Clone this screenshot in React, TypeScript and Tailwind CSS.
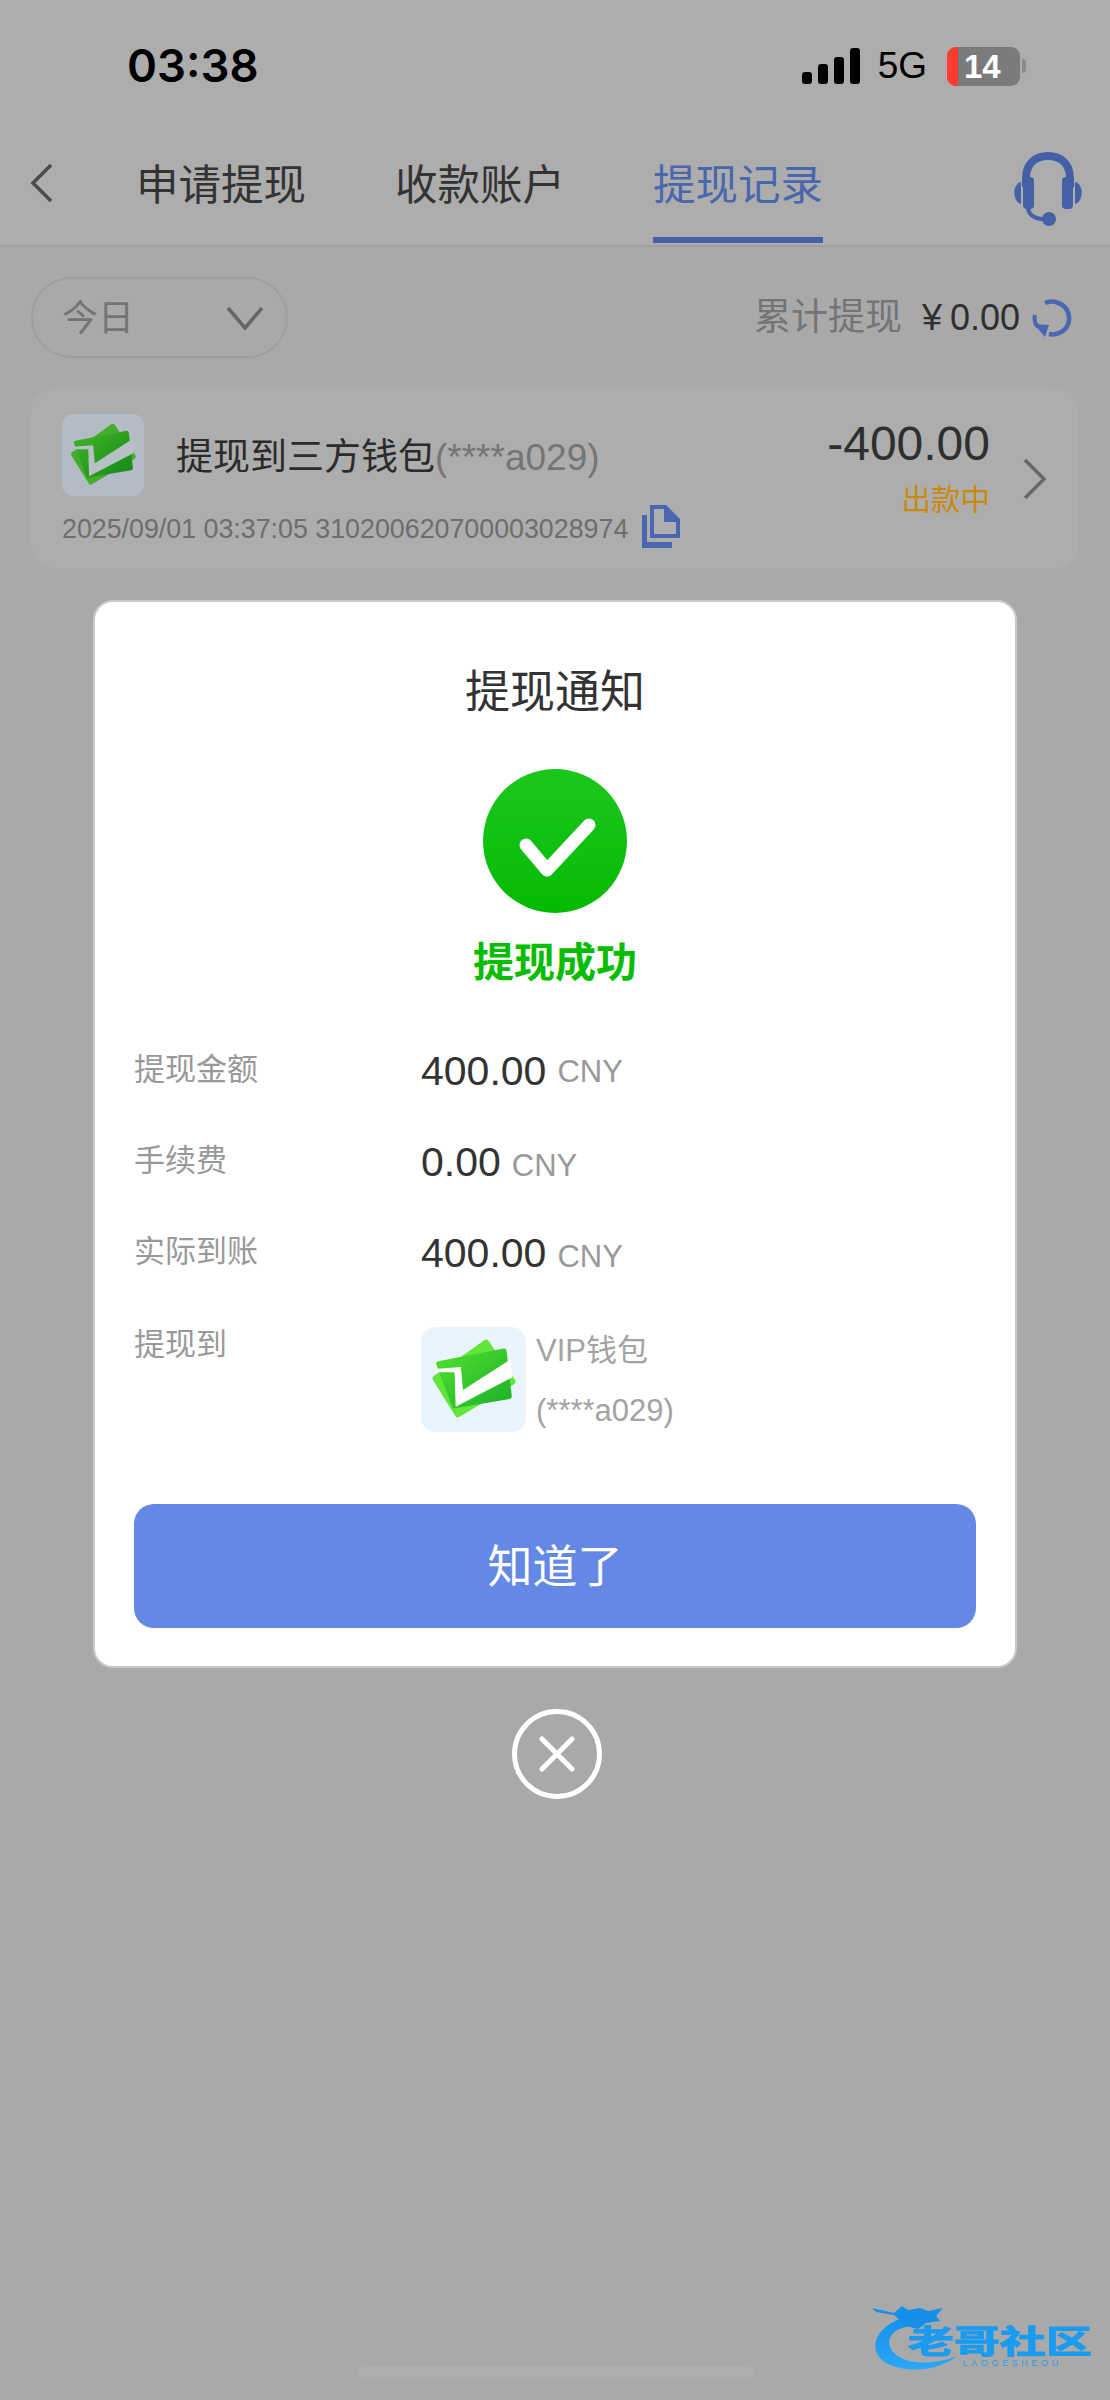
import React from "react";

const SANS = "font-['Liberation_Sans','Noto_Sans_CJK_SC',sans-serif]";

function WalletLogo({ id, dim, className }: { id: string; dim?: boolean; className: string }) {
  const bg = dim ? "#b3bcc5" : "#e9f4fd";
  const back = dim ? "#45ad2c" : "#62e53a";
  const from = dim ? "#41b32a" : "#4fe02e";
  const to = dim ? "#158a17" : "#1fb02a";
  const slash = dim ? "#b7c0c4" : "#ffffff";
  return (
    <svg viewBox="0 0 100 100" className={className}>
      <defs>
        <linearGradient id={id} x1="0" y1="0" x2="1" y2="1">
          <stop offset="0" stopColor={from} />
          <stop offset="1" stopColor={to} />
        </linearGradient>
      </defs>
      <rect width="100" height="100" rx="14" fill={bg} />
      <path d="M14 49 L62 15 L87 52 L35 83 Z" fill={back} stroke={back} strokeWidth="6" strokeLinejoin="round" />
      <path d="M17 35 L79 23 L84 66 L32 75 Z" fill={`url(#${id})`} stroke={`url(#${id})`} strokeWidth="5" strokeLinejoin="round" />
      <path d="M13 40 L38 38 L40 60 L85 31 L87 48 L33 76 L32 43 L14 43 Z" fill={slash} />
    </svg>
  );
}

function Headset() {
  return (
    <svg viewBox="0 0 72 76" className="h-[76px] w-[72px]" fill="none">
      <path d="M14 36 V27 C14 13 23 5 36 5 C49 5 58 13 58 27 V36" stroke="#4560a6" strokeWidth="8" />
      <rect x="11" y="26" width="11" height="32" rx="4" fill="#4560a6" />
      <rect x="50" y="26" width="11" height="32" rx="4" fill="#4560a6" />
      <path d="M9 31 C0 33 0 50 9 53 Z M63 31 C72 33 72 50 63 53 Z" fill="#4560a6" />
      <path d="M16 56 C16 64 23 68 32 68" stroke="#4560a6" strokeWidth="4" />
      <circle cx="37" cy="68" r="7" fill="#4560a6" />
    </svg>
  );
}

function RefreshMark() {
  return (
    <svg viewBox="0 0 40 40" className="h-[40px] w-[40px]" fill="none">
      <path d="M13 5 C22 1 36 6 37 19 C38 31 27 38 17 36" stroke="#4a67b4" strokeWidth="4.5" />
      <path d="M3 17 C2 21 3 26 6 29" stroke="#4a67b4" strokeWidth="4" />
      <path d="M2 26 L17 27 L13 39 Z" fill="#4a67b4" />
    </svg>
  );
}

function CopyMark() {
  return (
    <svg viewBox="0 0 40 46" className="h-[46px] w-[40px]">
      <path d="M8 2 H24 L38 16 V35 H8 Z" fill="#4a66b0" />
      <path d="M0 12 H5 V39 H30 V45 H0 Z" fill="#4a66b0" />
      <path d="M12 6 H22 V19 H34 V31 H12 Z" fill="#adadad" />
    </svg>
  );
}

function DetailRow({ label, value, unitClass }: { label: string; value: string; unitClass?: string }) {
  return (
    <div className="flex h-[91px] items-start pt-[5px]">
      <div className="w-[287px] text-[31px] leading-[42px] text-[#999999]">{label}</div>
      <div className="mt-[1px] flex items-baseline gap-[11px]">
        <span className="text-[41px] leading-[42px] text-[#333333]">{value}</span>
        <span className={`text-[31px] leading-[42px] text-[#999999] ${unitClass ?? ""}`}>CNY</span>
      </div>
    </div>
  );
}

function ForumMark() {
  return (
    <div className="absolute left-[868px] top-[2302px] h-[72px] w-[230px] blur-[0.6px]">
      <svg viewBox="0 0 230 72" className="absolute inset-0 h-full w-full" fill="none">
        <defs>
          <linearGradient id="dragon" x1="0" y1="0" x2="0" y2="1">
            <stop offset="0" stopColor="#1590ea" />
            <stop offset="1" stopColor="#2aa8f8" />
          </linearGradient>
        </defs>
        <path d="M34 16 C6 26 -2 50 20 62 C42 72 72 68 89 54 C70 62 40 64 27 52 C15 40 22 26 44 24 Z" fill="url(#dragon)" />
        <path d="M4 6 L26 11 L34 4 L40 8 L52 6 L60 9 L75 6 L68 14 L72 19 L58 21 L50 27 L38 24 L26 13 L8 10 Z" fill="#1590ea" />
      </svg>
      <div className="absolute left-[40px] top-[25px] w-[190px] origin-center scale-y-[0.68] whitespace-nowrap text-[46px] font-bold leading-[31px] text-[#1b9bf0] [-webkit-text-stroke:1.5px_#1b9bf0]">
        老哥社区
      </div>
      <div className="absolute left-[95px] top-[56px] whitespace-nowrap text-[9px] leading-[11px] tracking-[3.6px] text-[#2a9cee]">
        LAOGESHEOU
      </div>
    </div>
  );
}

export default function App() {
  return (
    <div className={`relative h-[2400px] w-[1110px] overflow-hidden bg-[#a9a9a9] ${SANS}`}>
      {/* status bar and tab header */}
      <header className="h-[247px] border-b-2 border-[#a0a0a0] bg-[#adadad]">
        <div className="flex h-[130px] items-start justify-between pl-[127px] pr-[84px] pt-[38px]">
          <span className="font-['Inter',sans-serif] text-[45.5px] font-semibold leading-[56px] text-black">03:38</span>
          <div className="flex items-center pt-[8px]">
            <div className="flex h-[36px] items-end gap-[6px]">
              <div className="h-[12px] w-[10px] rounded-[3px] bg-black" />
              <div className="h-[20px] w-[10px] rounded-[3px] bg-black" />
              <div className="h-[27px] w-[10px] rounded-[3px] bg-black" />
              <div className="h-[36px] w-[10px] rounded-[3px] bg-black" />
            </div>
            <span className="ml-[18px] text-[37px] leading-[40px] text-black">5G</span>
            <div className="ml-[20px] flex h-[39px] w-[73px] overflow-hidden rounded-[9px] bg-[#7b7b7b]">
              <div className="w-[11px] bg-[#ff3b30]" />
              <span className="ml-[6px] text-[33px] font-bold leading-[39px] text-white">14</span>
            </div>
            <div className="ml-[2px] h-[14px] w-[4px] rounded-r-full bg-[#8a8a8a]" />
          </div>
        </div>
        <nav className="flex h-[115px] items-start">
          <svg viewBox="0 0 26 40" className="ml-[29px] mt-[33px] h-[40px] w-[26px]" fill="none">
            <path d="M22 2 L4 20 L22 38" stroke="#4b4b4b" strokeWidth="3.5" />
          </svg>
          <div className="ml-[81px] mt-[33px] text-[42.5px] leading-[46px] text-[#333333]">申请提现</div>
          <div className="ml-[89px] mt-[33px] text-[42.5px] leading-[46px] text-[#333333]">收款账户</div>
          <div className="ml-[87px] flex h-[113px] flex-col items-center px-[1px]">
            <div className="mt-[33px] text-[42.5px] leading-[46px] text-[#4a66ac]">提现记录</div>
            <div className="mt-auto h-[6px] w-full bg-[#4560a6]" />
          </div>
          <div className="ml-auto mr-[26px] mt-[21px]">
            <Headset />
          </div>
        </nav>
      </header>

      {/* filter and total */}
      <div className="flex items-center justify-between pl-[31px] pr-[38px] pt-[30px]">
        <div className="flex h-[81px] w-[257px] items-center justify-between rounded-[41px] border-2 border-[#9f9f9f] pl-[29px] pr-[22px]">
          <span className="relative top-[1px] text-[36px] leading-[40px] text-[#747474]">今日</span>
          <svg viewBox="0 0 38 24" className="h-[24px] w-[38px]" fill="none">
            <path d="M2 2 L19 22 L36 2" stroke="#666666" strokeWidth="3.5" />
          </svg>
        </div>
        <div className="flex items-center">
          <span className="text-[37px] leading-[40px] text-[#747474]">累计提现</span>
          <span className="ml-[20px] text-[36px] leading-[40px] text-[#2f2f2f]">¥</span>
          <span className="ml-[8px] text-[36px] leading-[40px] text-[#2f2f2f]">0.00</span>
          <div className="ml-[12px]">
            <RefreshMark />
          </div>
        </div>
      </div>

      {/* withdrawal record */}
      <div className="mx-[31px] mt-[30px] flex h-[181px] rounded-[24px] bg-[#adadad] pl-[31px] pr-[31px] pt-[26px]">
        <div className="flex-1">
          <div className="flex items-center">
            <WalletLogo id="rec-logo" dim className="h-[82px] w-[82px]" />
            <div className="ml-[32px] pt-[6px]">
              <span className="text-[37px] leading-[46px] text-[#2b2b2b]">提现到三方钱包</span>
              <span className="text-[37px] leading-[46px] text-[#757575]">(****a029)</span>
            </div>
          </div>
          <div className="mt-[10px] flex items-center">
            <span className="text-[26.8px] leading-[46px] text-[#6d6d6d]">2025/09/01 03:37:05 310200620700003028974</span>
            <div className="-mt-[6px] ml-[14px]">
              <CopyMark />
            </div>
          </div>
        </div>
        <div className="flex flex-col items-end">
          <span className="mt-[2px] text-[48px] leading-[56px] text-[#2f2f2f]">-400.00</span>
          <span className="mt-[8px] text-[29.5px] leading-[40px] text-[#c98a0c]">出款中</span>
        </div>
        <svg viewBox="0 0 26 42" className="ml-[32px] mt-[44px] h-[42px] w-[26px]" fill="none">
          <path d="M3 2 L22 21 L3 40" stroke="#666666" strokeWidth="3.5" />
        </svg>
      </div>

      {/* success dialog */}
      <div className="absolute left-[93px] top-[600px] w-[924px]">
        <div className="h-[1068px] rounded-[20px] border-2 border-[#c9c9c9] bg-white px-[39px] pt-[61px]">
          <div className="text-center text-[45px] leading-[60px] text-[#333333]">提现通知</div>
          <div className="mt-[46px] flex justify-center">
            <div className="h-[144px] w-[144px] rounded-full bg-gradient-to-b from-[#1ac81c] to-[#04ba00]">
              <svg viewBox="0 0 144 144" className="h-[144px] w-[144px]" fill="none">
                <path d="M43 76 L64 101 L106 56" stroke="#ffffff" strokeWidth="13" strokeLinecap="round" strokeLinejoin="round" />
              </svg>
            </div>
          </div>
          <div className="mt-[25px] text-center text-[41px] font-bold leading-[50px] text-[#06bd00]">提现成功</div>
          <div className="mt-[56px]">
            <DetailRow label="提现金额" value="400.00" unitClass="relative -top-[3px]" />
            <DetailRow label="手续费" value="0.00" />
            <DetailRow label="实际到账" value="400.00" />
            <div className="flex items-start">
              <div className="mt-[7px] w-[287px] text-[31px] leading-[42px] text-[#999999]">提现到</div>
              <WalletLogo id="dlg-logo" className="mt-[10px] h-[105px] w-[105px]" />
              <div className="ml-[10px] mt-[4px] text-[31px] leading-[60px] text-[#a3a3a3]">
                <div>VIP钱包</div>
                <div>(****a029)</div>
              </div>
            </div>
          </div>
          <button className="mt-[63px] flex h-[124px] w-full items-center justify-center rounded-[20px] bg-[#6488e6] pt-[4px] text-[45px] text-white">
            知道了
          </button>
        </div>
        <div className="mt-[41px] flex justify-center pl-[3px]">
          <div className="flex h-[90px] w-[90px] items-center justify-center rounded-full border-[5px] border-white">
            <svg viewBox="0 0 36 36" className="h-[36px] w-[36px]" fill="none">
              <path d="M3 3 L33 33 M33 3 L3 33" stroke="#ffffff" strokeWidth="5" strokeLinecap="round" />
            </svg>
          </div>
        </div>
      </div>

      {/* home indicator */}
      <div className="absolute left-[357px] top-[2366px] h-[13px] w-[397px] rounded-full bg-[#adadad]" />
      <ForumMark />
    </div>
  );
}
